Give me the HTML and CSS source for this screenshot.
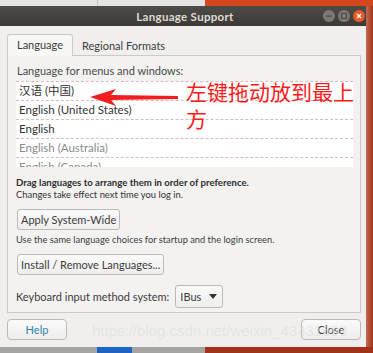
FILE: index.html
```html
<!DOCTYPE html>
<html lang="en">
<head>
    <meta charset="UTF-8">
    <title>Language Support</title>
    <link rel="stylesheet" href="styles.css">
</head>
<body>
    <div class="desktop">
        <div class="strip top-strip">
            <div class="strip-gray"><span class="seam"></span></div>
            <div class="strip-orange"></div>
        </div>
        <div class="middle">
            <div class="window">
                <div class="titlebar">
                    <span class="title">Language Support</span>
                    <div class="controls">
                        <span class="ctl ctl-min"><svg width="12" height="12" viewBox="0 0 12 12"><rect x="3" y="5.5" width="6" height="1.2" fill="#4a4a46"/></svg></span>
                        <span class="ctl ctl-max"><svg width="12" height="12" viewBox="0 0 12 12"><rect x="3.5" y="3.5" width="5" height="5" fill="none" stroke="#4a4a46" stroke-width="1.1"/></svg></span>
                        <span class="ctl ctl-close"><svg width="12" height="12" viewBox="0 0 12 12"><path d="M4 4 L8 8 M8 4 L4 8" stroke="#fff" stroke-width="1.3"/></svg></span>
                    </div>
                </div>
                <div class="content">
                    <div class="tabs">
                        <span class="tab active">Language</span>
                        <span class="tab">Regional Formats</span>
                    </div>
                    <div class="panel">
                        <div class="label">Language for menus and windows:</div>
                        <div class="lang-list">
                            <div class="row cjk">汉语 (中国)</div>
                            <div class="row">English (United States)</div>
                            <div class="row">English</div>
                            <div class="row muted">English (Australia)</div>
                            <div class="row muted">English (Canada)</div>
                        </div>
                        <div class="hint">
                            <b>Drag languages to arrange them in order of preference.</b>
                            <span>Changes take effect next time you log in.</span>
                        </div>
                        <button class="btn">Apply System-Wide</button>
                        <div class="note">Use the same language choices for startup and the login screen.</div>
                        <button class="btn">Install / Remove Languages...</button>
                        <div class="keyboard">
                            <span>Keyboard input method system:</span>
                            <span class="combo">IBus <svg width="8" height="5" viewBox="0 0 8 5"><path d="M0 0 L8 0 L4 5 Z" fill="#333"/></svg></span>
                        </div>
                    </div>
                    <div class="footer">
                        <button class="btn footer-btn help">Help</button>
                        <button class="btn footer-btn">Close</button>
                    </div>
                </div>

                <!-- annotation drawn over the screenshot -->
                <svg class="arrow" width="90" height="18" viewBox="0 0 90 18">
                    <polygon points="0,8 26,0 21,6 88,7 88,10 21,11 26,17" fill="#f21d1d"/>
                </svg>
                <div class="annot">左键拖动放到最上<br>方</div>
                <div class="watermark">https://blog.csdn.net/weixin_43431593</div>
            </div>
            <div class="edge"></div>
        </div>
        <div class="strip bottom-strip">
            <div class="strip-gray"><span class="blue"></span></div>
            <div class="strip-red"></div>
        </div>
    </div>
</body>
</html>
```

FILE: styles.css
```css
body {
    margin: 0;
    background-color: #a3331a;
    font-family: Lato, 'Noto Sans', sans-serif;
}
.desktop {
    width: 373px;
    height: 353px;
    display: flex;
    flex-direction: column;
    overflow: hidden;
}
.strip {
    display: flex;
    height: 6px;
    flex: none;
}
.strip-gray {
    width: 205px;
    background-color: #e4e4e2;
    position: relative;
}
.top-strip .seam {
    position: absolute;
    left: 97px;
    top: 0;
    width: 1px;
    height: 6px;
    background-color: #c2c2c0;
}
.strip-orange {
    flex: 1;
    background-color: #d4471b;
}
.bottom-strip .strip-gray {
    background-color: #a4a4a2;
}
.bottom-strip .blue {
    position: absolute;
    left: 97px;
    top: 0;
    width: 35px;
    height: 6px;
    background-color: #1d64c4;
}
.strip-red {
    flex: 1;
    background-color: #a3321a;
}
.middle {
    display: flex;
    height: 341px;
}
.edge {
    flex: 1;
    background: linear-gradient(to right, #c26a52, #a3331a);
}
.window {
    width: 366px;
    display: flex;
    flex-direction: column;
    position: relative;
    background-color: #f0efee;
}
.titlebar {
    height: 20px;
    background: linear-gradient(#4d4c48, #3b3a36);
    display: flex;
    align-items: center;
    justify-content: center;
    position: relative;
}
.title {
    color: #dfdbd2;
    font-size: 11.5px;
    font-weight: bold;
    letter-spacing: 0.3px;
    margin-left: 4px;
}
.controls {
    position: absolute;
    right: 1px;
    top: 4px;
    display: flex;
    gap: 3px;
}
.ctl {
    width: 12px;
    height: 12px;
    border-radius: 50%;
    background-color: #7b7a75;
    display: flex;
}
.ctl-close {
    background-color: #ea5a27;
}
.content {
    flex: 1;
    padding: 9px 5px 0 7px;
    display: flex;
    flex-direction: column;
}
.tabs {
    display: flex;
    align-items: flex-end;
    height: 21px;
    position: relative;
    z-index: 1;
}
.tab {
    font-size: 11px;
    color: #3c3c3c;
    padding: 0 9px;
    height: 20px;
    line-height: 20px;
}
.tab.active {
    background-color: #f7f7f6;
    border: 1px solid #cdcac5;
    border-bottom: none;
    border-radius: 3px 3px 0 0;
    padding: 0 9px 1px;
}
.panel {
    border: 1px solid #cdcac5;
    background-color: #f3f2f1;
    margin-top: -1px;
    height: 258px;
    padding: 8px 7px 0 8px;
    box-sizing: border-box;
    color: #3c3c3c;
    font-size: 11px;
}
.label {
    color: #4a4a4a;
    line-height: 13px;
    margin-bottom: 4px;
    margin-left: 1px;
}
.lang-list {
    background-color: #fff;
    height: 86px;
    overflow: hidden;
    margin-bottom: 10px;
}
.row {
    height: 19px;
    line-height: 18px;
    font-size: 11.5px;
    padding-left: 3px;
    border-top: 1px dashed #d6bcbc;
    box-sizing: border-box;
    color: #333;
}
.row.cjk {
    font-family: Lato, 'Noto Sans CJK SC', sans-serif;
}
.row.muted {
    color: #8b8b8b;
}
.hint {
    display: flex;
    flex-direction: column;
    line-height: 12px;
    font-size: 9.6px;
    color: #333;
}
.hint span {
    font-size: 9.4px;
}
.hint b {
    color: #2e2e2e;
}
.btn {
    font-family: Lato, 'Noto Sans', sans-serif;
    font-size: 11px;
    color: #3c3c3c;
    background: linear-gradient(#fafafa, #efeeed);
    border: 1px solid #bdbab5;
    border-radius: 3px;
    height: 21px;
    padding: 0 3px;
    display: block;
}
.panel .btn {
    margin-top: 8px;
    margin-left: 1px;
}
.note {
    font-size: 9.3px;
    line-height: 12px;
    margin-top: 4px;
    color: #3c3c3c;
}
.keyboard {
    display: flex;
    align-items: center;
    gap: 6px;
    margin-top: 10px;
    font-size: 11px;
    color: #3c3c3c;
}
.combo {
    display: flex;
    align-items: center;
    gap: 8px;
    height: 21px;
    padding: 0 5px 0 4px;
    border: 1px solid #bdbab5;
    border-radius: 3px;
    background: linear-gradient(#fafafa, #efeeed);
}
.footer {
    display: flex;
    justify-content: space-between;
    padding: 6px 0 0 0;
}
.footer-btn {
    width: 60px;
    height: 21px;
    border-radius: 4px;
}
.help {
    color: #2a84a8;
}
.arrow {
    position: absolute;
    left: 90px;
    top: 83px;
}
.annot {
    position: absolute;
    left: 186px;
    top: 72px;
    font-family: 'Noto Sans CJK SC', sans-serif;
    font-size: 21px;
    line-height: 27px;
    color: #ff1a1a;
}
.watermark {
    position: absolute;
    left: 92px;
    top: 316px;
    font-family: 'Liberation Sans', sans-serif;
    font-size: 15px;
    color: rgba(220, 220, 220, 0.6);
    pointer-events: none;
}
```
